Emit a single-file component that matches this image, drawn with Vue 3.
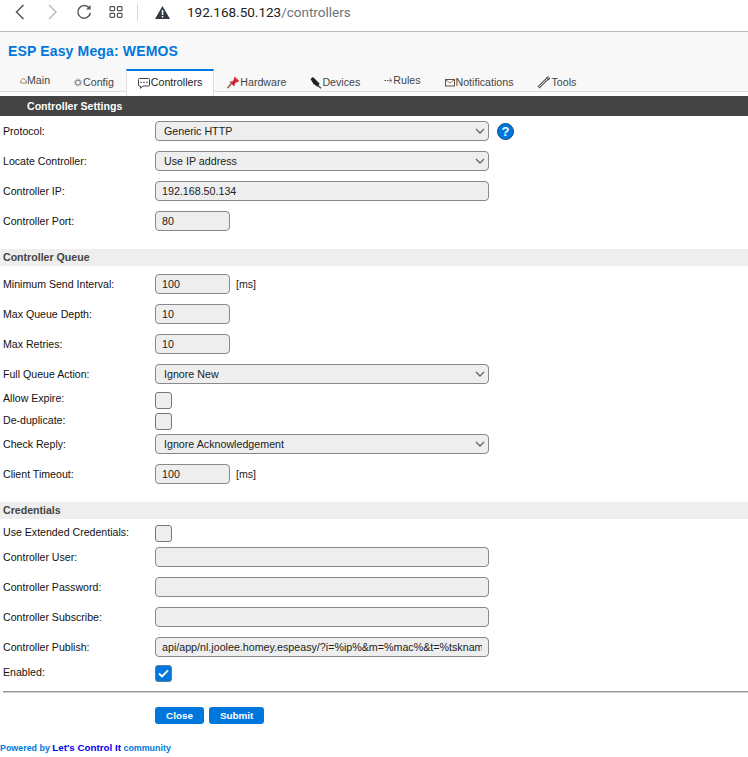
<script setup>
const tabs = [
  { name: 'Main', icon: 'main', w: 7, raised: true },
  { name: 'Config', icon: 'config', w: 9 },
  { name: 'Controllers', icon: 'controllers', w: 13, active: true },
  { name: 'Hardware', icon: 'hardware', w: 14 },
  { name: 'Devices', icon: 'devices', w: 12 },
  { name: 'Rules', icon: 'rules', w: 9, raised: true },
  { name: 'Notifications', icon: 'notifications', w: 11 },
  { name: 'Tools', icon: 'tools', w: 14 },
]

const general = [
  { label: 'Protocol:', type: 'select', value: 'Generic HTTP', help: true },
  { label: 'Locate Controller:', type: 'select', value: 'Use IP address' },
  { label: 'Controller IP:', type: 'wide', value: '192.168.50.134' },
  { label: 'Controller Port:', type: 'short', value: '80' },
]
const queue = [
  { label: 'Minimum Send Interval:', type: 'short', value: '100', unit: '[ms]' },
  { label: 'Max Queue Depth:', type: 'short', value: '10' },
  { label: 'Max Retries:', type: 'short', value: '10' },
  { label: 'Full Queue Action:', type: 'select', value: 'Ignore New' },
  { label: 'Allow Expire:', type: 'check', tight: true, h: 22 },
  { label: 'De-duplicate:', type: 'check', tight: true, h: 21 },
  { label: 'Check Reply:', type: 'select', value: 'Ignore Acknowledgement', h: 24 },
  { label: 'Client Timeout:', type: 'short', value: '100', unit: '[ms]', h: 36 },
]
const credentials = [
  { label: 'Use Extended Credentials:', type: 'check', tight: true, h: 17 },
  { label: 'Controller User:', type: 'wide', value: '' },
  { label: 'Controller Password:', type: 'wide', value: '' },
  { label: 'Controller Subscribe:', type: 'wide', value: '' },
  { label: 'Controller Publish:', type: 'wide', value: 'api/app/nl.joolee.homey.espeasy/?i=%ip%&m=%mac%&t=%tsknam' },
  { label: 'Enabled:', type: 'check', checked: true, tight: true, h: 23 },
]
const sections = [
  { title: '', rows: general },
  { title: 'Controller Queue', rows: queue },
  { title: 'Credentials', rows: credentials },
]
</script>

<template>
  <div class="page">
    <div class="browser">
      <svg class="nav back" width="12" height="20" viewBox="0 0 12 20"><path d="M9.5 3 L2.5 10 L9.5 17" /></svg>
      <svg class="nav forward" width="12" height="20" viewBox="0 0 12 20"><path d="M2 3 L9 10 L2 17" /></svg>
      <svg class="nav reload" width="16" height="16" viewBox="0 0 16 16"><path d="M13.2 4 A6.3 6.3 0 1 0 14.4 9" /><path class="solid" d="M14.6 1 V5.6 H10 Z" /></svg>
      <svg class="nav grid" width="14" height="12" viewBox="0 0 14 12"><rect x="1" y="0.7" width="4.6" height="4" rx="0.8" /><rect x="8.4" y="0.7" width="4.6" height="4" rx="0.8" /><rect x="1" y="7.3" width="4.6" height="4" rx="0.8" /><rect x="8.4" y="7.3" width="4.6" height="4" rx="0.8" /></svg>
      <span class="sep"></span>
      <svg class="warn" width="15" height="13" viewBox="0 0 15 13"><path d="M7.5 0 L15 13 H0 Z" fill="#333a42" /><rect x="6.8" y="4" width="1.5" height="5" fill="#fff" /><rect x="6.8" y="10" width="1.5" height="1.5" fill="#fff" /></svg>
      <span class="url">192.168.50.123<span class="path">/controllers</span></span>
    </div>

    <header class="head">
      <h1>ESP Easy Mega: WEMOS</h1>
      <nav class="tabs">
        <a v-for="t in tabs" :key="t.name" class="tab" :class="{ active: t.active, raised: t.raised }">
          <svg class="ic" :width="t.w" height="14" :viewBox="`0 0 ${t.w} 14`">
            <path v-if="t.icon === 'main'" d="M0.7 10 V8 L3.5 5 L6.3 8 V10 Z" fill="none" stroke="#a08a60" />
            <g v-else-if="t.icon === 'config'"><circle cx="4" cy="7.5" r="2.4" fill="none" stroke="#8a8a8a" stroke-width="1.1" /><circle cx="4" cy="7.5" r="3.6" fill="none" stroke="#9a9a9a" stroke-width="0.9" stroke-dasharray="1.2 1" /></g>
            <g v-else-if="t.icon === 'controllers'"><path d="M1.5 3.5 H10.5 Q11.5 3.5 11.5 4.5 V10 Q11.5 11 10.5 11 H5 L2.5 13.3 V11 H1.5 Q0.5 11 0.5 10 V4.5 Q0.5 3.5 1.5 3.5 Z" fill="#fff" stroke="#444" /><path d="M2.5 7.3 H3.7 M5.4 7.3 H6.6 M8.3 7.3 H9.5" stroke="#333" stroke-width="1.2" /></g>
            <g v-else-if="t.icon === 'hardware'"><path d="M1.5 13 L5.5 8.5" stroke="#8a5a4a" stroke-width="1.4" /><path d="M3.5 6.8 L7 6.2 L8.5 2.5 L12.7 6.5 L9.2 8 L8.2 11.5 Z" fill="#c8232c" /><path d="M7.5 3 L9 1.8 L13 5.5 L12 7 Z" fill="#e23c3c" /></g>
            <g v-else-if="t.icon === 'devices'"><path d="M0.5 4 L3 2 L9.5 8.5 L8 12 L3.5 9 Z" fill="#222" /><path d="M8 10.5 L11 13.3" stroke="#444" stroke-width="1.4" /></g>
            <g v-else-if="t.icon === 'rules'"><path d="M0.5 7.5 H8 M5.7 5.5 L8 7.5 L5.7 9.5" fill="none" stroke="#333" stroke-width="0.9" stroke-dasharray="1.5 1" /></g>
            <g v-else-if="t.icon === 'notifications'"><rect x="0.5" y="4.5" width="9" height="6.5" fill="none" stroke="#555" /><path d="M0.8 5 L5 8 L9.2 5" fill="none" stroke="#a0774a" /></g>
            <g v-else-if="t.icon === 'tools'"><path d="M1.5 12.5 L11 3" stroke="#555" stroke-width="2.8" /><path d="M1.5 12.5 L11 3" stroke="#e4e4e4" stroke-width="1" /><path d="M9.5 3.5 L11.5 1.5 M11 5 L13 3" stroke="#555" stroke-width="1.2" /></g>
          </svg>{{ t.name }}
        </a>
      </nav>
    </header>

    <div class="bar">Controller Settings</div>

    <main class="form">
      <section v-for="s in sections" :key="s.title" class="section">
        <h2 v-if="s.title">{{ s.title }}</h2>
        <div v-for="r in s.rows" :key="r.label" class="row" :class="{ tight: r.tight }" :style="r.h ? { height: r.h + 'px' } : null">
          <label>{{ r.label }}</label>
          <span v-if="r.type === 'select'" class="selectbox">
            <select class="field wide"><option>{{ r.value }}</option></select>
            <svg class="chev" width="10" height="6" viewBox="0 0 10 6"><path d="M1 1 L5 5 L9 1" fill="none" stroke="#666" stroke-width="1.3" /></svg>
          </span>
          <input v-else-if="r.type === 'wide'" class="field wide" :value="r.value" />
          <input v-else-if="r.type === 'short'" class="field short" :value="r.value" />
          <span v-else class="check" :class="{ on: r.checked }">
            <svg v-if="r.checked" width="11" height="9" viewBox="0 0 11 9"><path d="M1 4.6 L4 7.4 L10 1.4" fill="none" stroke="#fff" stroke-width="2" /></svg>
          </span>
          <span v-if="r.unit" class="unit">{{ r.unit }}</span>
          <span v-if="r.help" class="help">?</span>
        </div>
      </section>
      <hr />
      <div class="actions">
        <button>Close</button>
        <button>Submit</button>
      </div>
    </main>

    <footer class="foot">Powered by <a>Let's Control It</a> community</footer>
  </div>
</template>

<style>
html, body { margin: 0; background: #fff; }
</style>

<style scoped>
.page { width: 748px; height: 757px; overflow: hidden; font-family: "Liberation Sans", Arial, sans-serif; font-size: 10.6px; color: #111; }
.browser { height: 32px; box-sizing: border-box; border-bottom: 1px solid #b4bcc6; display: flex; align-items: center; padding: 0 0 7px 14px; }
.nav { fill: none; stroke: #555; stroke-width: 1.5; flex: none; }
.nav .solid { fill: #555; stroke: none; }
.forward { stroke: #bbb; margin-left: 21px; }
.reload { margin-left: 17px; }
.grid { margin-left: 17px; stroke-width: 1.2; }
.sep { width: 1px; height: 17px; background: #d5d8dc; margin-left: 14px; }
.warn { margin-left: 17px; }
.url { margin-left: 17px; font-family: Roboto, sans-serif; font-size: 13.5px; color: #222; }
.path { color: #6a7280; }
.head { height: 59px; background: #f8f8f8; border-bottom: 1px solid #ddd; display: flex; flex-direction: column; justify-content: space-between; }
h1 { margin: 11px 0 0 8px; font-size: 14px; font-weight: bold; color: #07d; letter-spacing: 0.15px; line-height: 16px; }
.tabs { display: flex; padding-left: 8px; height: 27px; margin-bottom: -5px; font-size: 10.65px; }
.tab { padding: 0 12px 1px; box-sizing: border-box; height: 27px; display: flex; align-items: center; color: #444; white-space: nowrap; position: relative; }
.tab.raised { top: -2px; }
.tab.active { background: #fff; border-top: 2px solid #07d; border-left: 1px solid #ddd; border-right: 1px solid #ddd; padding: 0 11px 3px; color: #222; }
.ic { flex: none; }
.bar { margin-top: 4px; height: 20px; background: #444; color: #fff; font-weight: bold; line-height: 20px; padding-left: 27px; }
.section:first-child { margin-bottom: 13px; }
.section:nth-child(2) { margin-bottom: 10px; }
h2 { margin: 0 0 3px; height: 17px; background: #eee; color: #444; font-size: 10.6px; font-weight: bold; line-height: 17px; padding-left: 3px; }
.section:nth-child(3) h2 { margin-bottom: 6px; }
.row { height: 30px; display: flex; align-items: center; }
.row label { width: 155px; padding-left: 3px; box-sizing: border-box; flex: none; }
.tight label { position: relative; top: -2px; }
.selectbox { position: relative; display: flex; }
.chev { position: absolute; right: 4px; top: 7px; }
.field { box-sizing: border-box; height: 20px; border: 1px solid #888; border-radius: 4px; background: #eee; font: 10.7px "Liberation Sans", Arial, sans-serif; color: #222; padding: 0 6px; margin: 0; outline: none; }
select.field { appearance: none; padding: 0 8px; }
.wide { width: 334px; }
.short { width: 75px; }
.check { box-sizing: border-box; width: 17px; height: 17px; border: 1px solid #777; border-radius: 3px; background: #eee; display: flex; align-items: center; justify-content: center; }
.check.on { background: #07d; border-color: #5a7f9f; }
.unit { margin-left: 6px; color: #222; }
.help { margin-left: 8px; width: 15px; height: 15px; border: 1px solid #124a80; border-radius: 50%; background: #07d; color: #fff; font-size: 13px; font-weight: bold; line-height: 15px; text-align: center; }
hr { margin: 6px 0 0 3px; border: 0; border-top: 1px solid #999; border-bottom: 1px solid #ccc; height: 0; }
.actions { display: flex; gap: 5px; padding: 14px 0 0 155px; }
button { height: 17px; padding: 0 11px; border: 0; border-radius: 3px; background: #07d; color: #fff; font: bold 9.9px "Liberation Sans", Arial, sans-serif; }
.foot { margin-top: 18px; font-size: 8.9px; color: #07d; font-weight: bold; line-height: 12px; }
.foot a { color: #00e; font-size: 9.8px; }
</style>
